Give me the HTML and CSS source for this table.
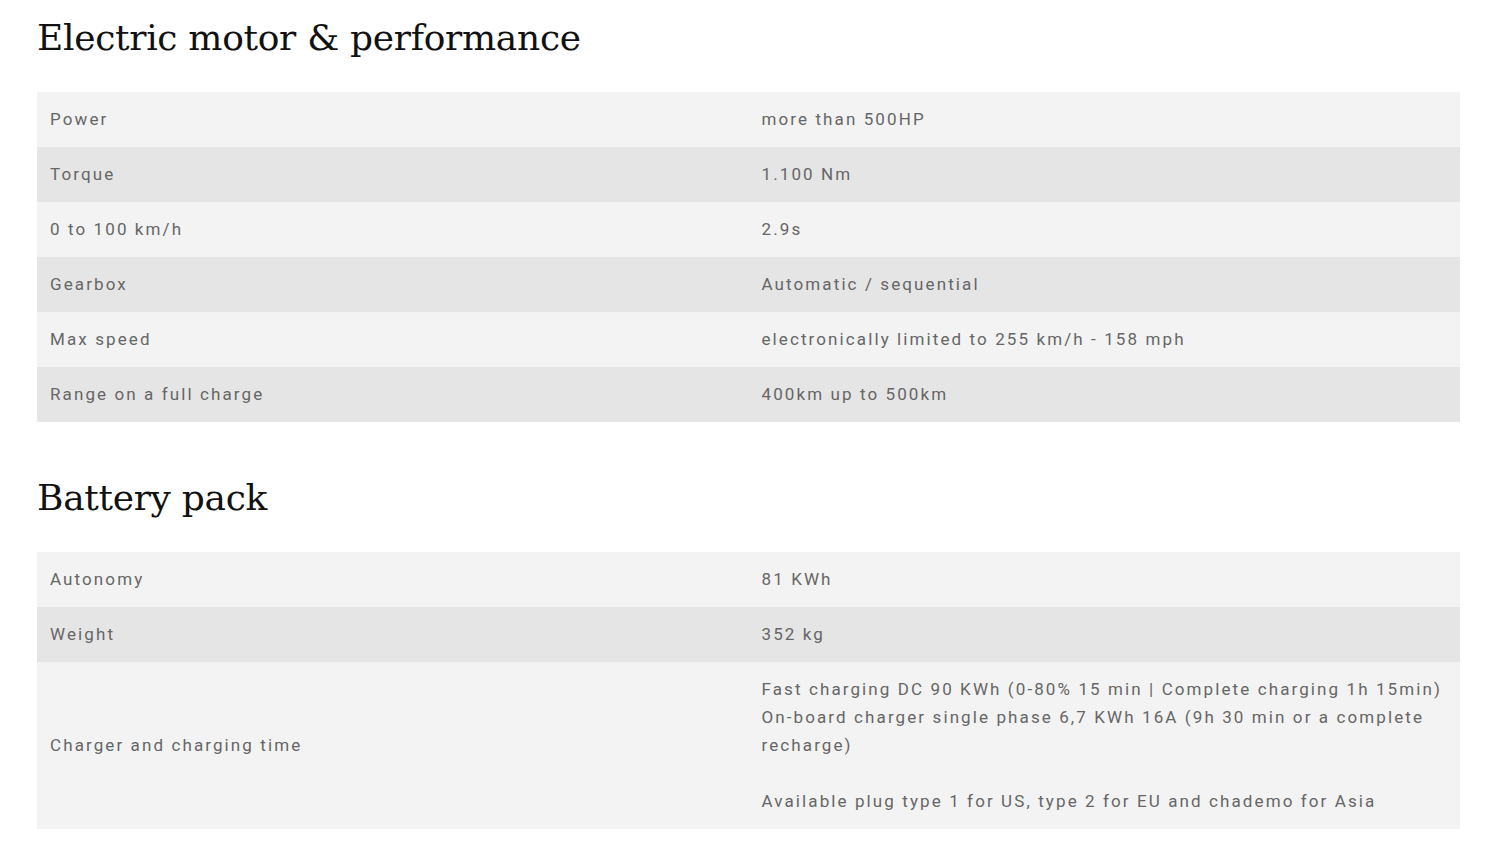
FILE: index.html
```html
<!DOCTYPE html>
<html>
<head>
<meta charset="utf-8">
<link rel="stylesheet" href="styles.css">
</head>
<body>
<main class="page">
  <h2 class="section-title first">Electric motor &amp; performance</h2>
  <table class="specs">
    <tr><td>Power</td><td>more than 500HP</td></tr>
    <tr><td>Torque</td><td>1.100 Nm</td></tr>
    <tr><td>0 to 100 km/h</td><td>2.9s</td></tr>
    <tr><td>Gearbox</td><td>Automatic / sequential</td></tr>
    <tr><td>Max speed</td><td>electronically limited to 255 km/h - 158 mph</td></tr>
    <tr><td>Range on a full charge</td><td>400km up to 500km</td></tr>
  </table>
  <h2 class="section-title">Battery pack</h2>
  <table class="specs">
    <tr><td>Autonomy</td><td>81 KWh</td></tr>
    <tr><td>Weight</td><td>352 kg</td></tr>
    <tr><td>Charger and charging time</td><td>Fast charging DC 90 KWh (0-80% 15 min | Complete charging 1h 15min)<br>On-board charger single phase 6,7 KWh 16A (9h 30 min or a complete recharge)<br><br>Available plug type 1 for US, type 2 for EU and chademo for Asia</td></tr>
  </table>
</main>
</body>
</html>
```
FILE: styles.css
```css
html, body {
  margin: 0;
  padding: 0;
  background: #ffffff;
}
.page {
  width: 1423px;
  margin-left: 37px;
  padding-top: 1px;
}
.section-title {
  font-family: "DejaVu Serif", "Liberation Serif", serif;
  font-weight: normal;
  font-size: 36px;
  line-height: 50px;
  color: #111111;
  margin: 12px 0 29px 0;
  letter-spacing: -0.3px;
}
.specs + .section-title {
  margin-top: 51px;
}
.specs {
  width: 100%;
  border-collapse: collapse;
  table-layout: fixed;
  font-family: Roboto, "Noto Sans", sans-serif;
  font-size: 17px;
  letter-spacing: 2.1px;
  color: #666666;
}
.specs td {
  padding: 13px 13px 14px 13px;
  line-height: 28px;
  vertical-align: middle;
  width: 50%;
}
.specs tr:nth-child(odd) td {
  background: #f3f3f3;
}
.specs tr:nth-child(even) td {
  background: #e5e5e5;
}
```
